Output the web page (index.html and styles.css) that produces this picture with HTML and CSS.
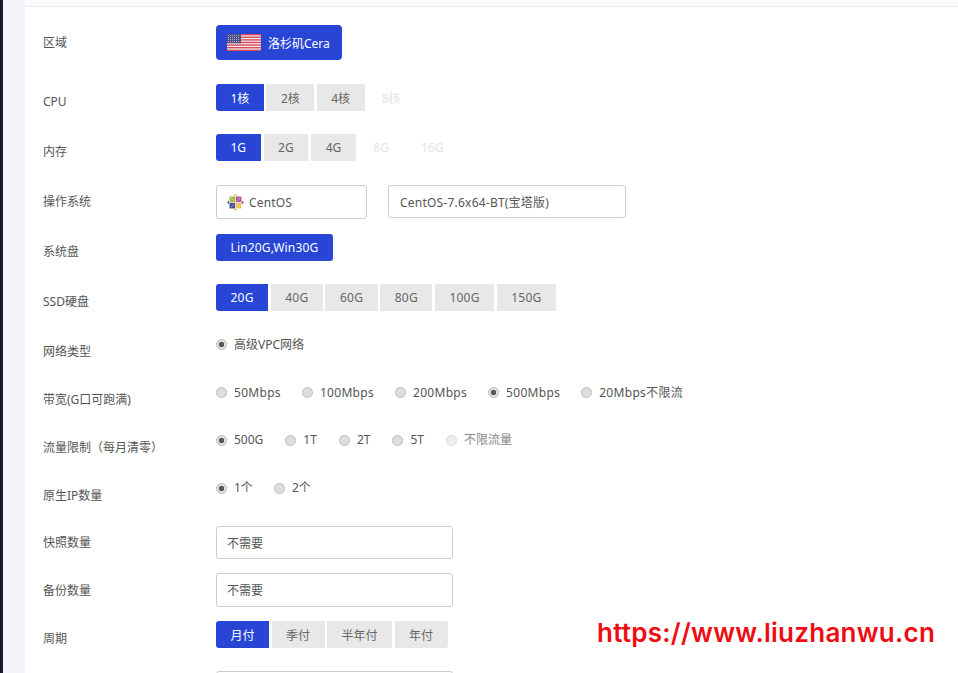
FILE: index.html
```html
<!DOCTYPE html>
<html lang="zh-CN">
<head>
<meta charset="utf-8">
<title>配置</title>
<link rel="stylesheet" href="styles.css">
</head>
<body>
<div class="rail"></div>
<div class="gutter"></div>
<main class="main">
  <div class="topstrip"></div>
  <form class="form">
    <div class="row row-loose">
      <div class="label">区域</div>
      <div class="opts">
        <button type="button" class="opt active region">
          <svg class="flag" viewBox="0 0 34 17" aria-hidden="true">
            <rect width="34" height="17" fill="#f4f0f2"/>
            <rect width="34" height="1.4" fill="#d8485a"/>
            <rect y="2.6" width="34" height="1.4" fill="#d8485a"/>
            <rect y="5.2" width="34" height="1.4" fill="#d8485a"/>
            <rect y="7.8" width="34" height="1.4" fill="#d8485a"/>
            <rect y="10.4" width="34" height="1.4" fill="#d8485a"/>
            <rect y="13" width="34" height="1.4" fill="#d8485a"/>
            <rect y="15.6" width="34" height="1.4" fill="#d8485a"/>
            <rect width="14" height="9.2" fill="#4d4f85"/>
            <path d="M1 1.5h12M1 3.5h12M1 5.5h12M1 7.5h12" stroke="#b9bad6" stroke-width=".9" stroke-dasharray="1 1"/>
          </svg>
          洛杉矶Cera
        </button>
      </div>
    </div>
    <div class="row">
      <div class="label">CPU</div>
      <div class="opts">
        <button type="button" class="opt active">1核</button>
        <button type="button" class="opt">2核</button>
        <button type="button" class="opt">4核</button>
        <button type="button" class="opt off">8核</button>
      </div>
    </div>
    <div class="row row-loose">
      <div class="label">内存</div>
      <div class="opts opts-gap3">
        <button type="button" class="opt active">1G</button>
        <button type="button" class="opt">2G</button>
        <button type="button" class="opt">4G</button>
        <button type="button" class="opt off">8G</button>
        <button type="button" class="opt off">16G</button>
      </div>
    </div>
    <div class="row row-os">
      <div class="label label-tight">操作系统</div>
      <div class="fields">
        <div class="field field-os">
          <svg class="centos" viewBox="0 0 20 20" aria-hidden="true">
            <path d="M10 0l2.4 2.6h-4.8z" fill="#e6c34a"/>
            <path d="M20 10l-2.6 2.4v-4.8z" fill="#b0478f"/>
            <path d="M10 20l-2.4-2.6h4.8z" fill="#e6c34a"/>
            <path d="M0 10l2.6-2.4v4.8z" fill="#4b4d93"/>
            <rect x="3" y="3" width="6.6" height="6.6" fill="#a4bb48"/>
            <rect x="10.4" y="3" width="6.6" height="6.6" fill="#b9539b"/>
            <rect x="3" y="10.4" width="6.6" height="6.6" fill="#4b4d93"/>
            <rect x="10.4" y="10.4" width="6.6" height="6.6" fill="#f0c75e"/>
            <path d="M4.6 4.6l3.4 3.4M15.4 4.6l-3.4 3.4M4.6 15.4l3.4-3.4" stroke="#fff" stroke-opacity=".55" stroke-width=".9"/>
          </svg>
          <span class="spaced-sm">CentOS</span>
        </div>
        <div class="field field-ver">CentOS-7.6x64-BT(宝塔版)</div>
      </div>
    </div>
    <div class="row">
      <div class="label">系统盘</div>
      <div class="opts">
        <button type="button" class="opt active solo spaced-sm">Lin20G,Win30G</button>
      </div>
    </div>
    <div class="row">
      <div class="label">SSD硬盘</div>
      <div class="opts">
        <button type="button" class="opt active spaced-md">20G</button>
        <button type="button" class="opt spaced-md">40G</button>
        <button type="button" class="opt spaced-md">60G</button>
        <button type="button" class="opt spaced-md">80G</button>
        <button type="button" class="opt spaced-md">100G</button>
        <button type="button" class="opt spaced-md">150G</button>
      </div>
    </div>
    <div class="row row-radio">
      <div class="label">网络类型</div>
      <div class="radios radios-low">
        <label class="radio"><input type="radio" name="net" checked>高级VPC网络</label>
      </div>
    </div>
    <div class="row row-radio">
      <div class="label">带宽(G口可跑满)</div>
      <div class="radios radios-low">
        <label class="radio spaced"><input type="radio" name="bw">50Mbps</label>
        <label class="radio spaced"><input type="radio" name="bw">100Mbps</label>
        <label class="radio spaced"><input type="radio" name="bw">200Mbps</label>
        <label class="radio spaced"><input type="radio" name="bw" checked>500Mbps</label>
        <label class="radio spaced"><input type="radio" name="bw">20Mbps不限流</label>
      </div>
    </div>
    <div class="row row-radio">
      <div class="label">流量限制（每月清零）</div>
      <div class="radios radios-wide">
        <label class="radio"><input type="radio" name="tf" checked>500G</label>
        <label class="radio"><input type="radio" name="tf">1T</label>
        <label class="radio"><input type="radio" name="tf">2T</label>
        <label class="radio"><input type="radio" name="tf">5T</label>
        <label class="radio"><input type="radio" name="tf" disabled>不限流量</label>
      </div>
    </div>
    <div class="row row-radio">
      <div class="label">原生IP数量</div>
      <div class="radios">
        <label class="radio"><input type="radio" name="ip" checked>1个</label>
        <label class="radio"><input type="radio" name="ip">2个</label>
      </div>
    </div>
    <div class="row row-field">
      <div class="label label-tight">快照数量</div>
      <div class="field field-wide field-short">不需要</div>
    </div>
    <div class="row row-field">
      <div class="label">备份数量</div>
      <div class="field field-wide">不需要</div>
    </div>
    <div class="row">
      <div class="label">周期</div>
      <div class="opts opts-round">
        <button type="button" class="opt active">月付</button>
        <button type="button" class="opt">季付</button>
        <button type="button" class="opt">半年付</button>
        <button type="button" class="opt">年付</button>
      </div>
    </div>
    <div class="row row-field">
      <div class="label"></div>
      <div class="field field-wide"></div>
    </div>
  </form>
</main>
<div class="watermark">https://www.liuzhanwu.cn</div>
</body>
</html>
```
FILE: styles.css
```css
* { box-sizing: border-box; }
html, body { height: 673px; overflow: hidden; }
body {
  margin: 0;
  display: flex;
  background: #fff;
  color: #555;
  font-family: "Noto Sans", "Noto Sans CJK SC", sans-serif;
  font-size: 12px;
}
.rail { width: 3px; flex: none; background: #1c1a2e; }
.gutter { width: 22px; flex: none; background: #f4f4fb; }
.main { flex: 1; min-width: 0; }
.topstrip { height: 7px; background: #fbfbfd; border-bottom: 1px solid #ececf0; }
.form { padding: 18px 0 0 18px; }

.row { display: flex; align-items: flex-start; margin-bottom: 23px; }
.row-loose { margin-bottom: 24px; }
.row-os { margin-bottom: 15px; }
.row-radio { margin-bottom: 22px; }
.row-field { margin-bottom: 14px; }

.label { width: 173px; flex: none; height: 26px; padding-top: 9px; line-height: 18px; color: #555; }
.label-tight { padding-top: 8px; }

.spaced { letter-spacing: .3px; }
.spaced-sm { letter-spacing: .15px; }
.spaced-md { letter-spacing: .25px; }

.opts { display: flex; gap: 2.5px; }
.opts-gap3 { gap: 3px; }
.opt {
  height: 27px;
  padding: 0 14.5px;
  border: 0;
  border-radius: 0;
  background: #e8e8e8;
  color: #666;
  font: inherit;
  display: flex;
  align-items: center;
  white-space: nowrap;
}
.opt.spaced-sm { letter-spacing: .15px; }
.opt.spaced-md { letter-spacing: .25px; }
.opt:first-child { border-radius: 3px 0 0 3px; }
.opts-round .opt:last-child { border-radius: 0 3px 3px 0; }
.opt.active { background: #2845d6; color: #fff; }
.opt.off { background: transparent; color: #e3e3ea; }
.opt.solo { border-radius: 3px; }
.opt.region { height: 35px; padding: 0 12px 0 11px; gap: 7px; border-radius: 4px; }
.flag { width: 34px; height: 17px; display: block; }

.fields { display: flex; gap: 21px; }
.field {
  height: 34px;
  padding: 0 10px;
  border: 1px solid #ccc;
  border-radius: 3px;
  background: #fff;
  color: #555;
  display: flex;
  align-items: center;
}
.field-os { width: 151px; gap: 5px; }
.field-ver { width: 238px; height: 33px; padding: 0 11px; letter-spacing: .22px; }
.field-wide { width: 237px; }
.field-short { height: 33px; }
.centos { width: 17px; height: 17px; display: block; }

.radios { display: flex; gap: 21px; height: 20px; }
.radios-low { height: 21px; }
.radios-wide { gap: 22px; }
.radio { display: flex; align-items: center; gap: 7px; white-space: nowrap; line-height: 20px; }
.radio input {
  appearance: none;
  width: 11px;
  height: 11px;
  margin: 0;
  border: 1px solid #bdbdbd;
  border-radius: 50%;
  background: #dedede;
  flex: none;
}
.radio input:checked { background: radial-gradient(circle, #555 0 2.4px, #dedede 3px); }
.radio input:disabled { background: #eee; border-color: #ddd; }
.radio:has(input:disabled) { color: #888; }

.watermark {
  position: absolute;
  left: 597px;
  top: 618px;
  color: #ee0c12;
  font-family: Inter, sans-serif;
  font-weight: 600;
  font-size: 26px;
  letter-spacing: .26px;
  line-height: 30px;
  white-space: nowrap;
}
```
